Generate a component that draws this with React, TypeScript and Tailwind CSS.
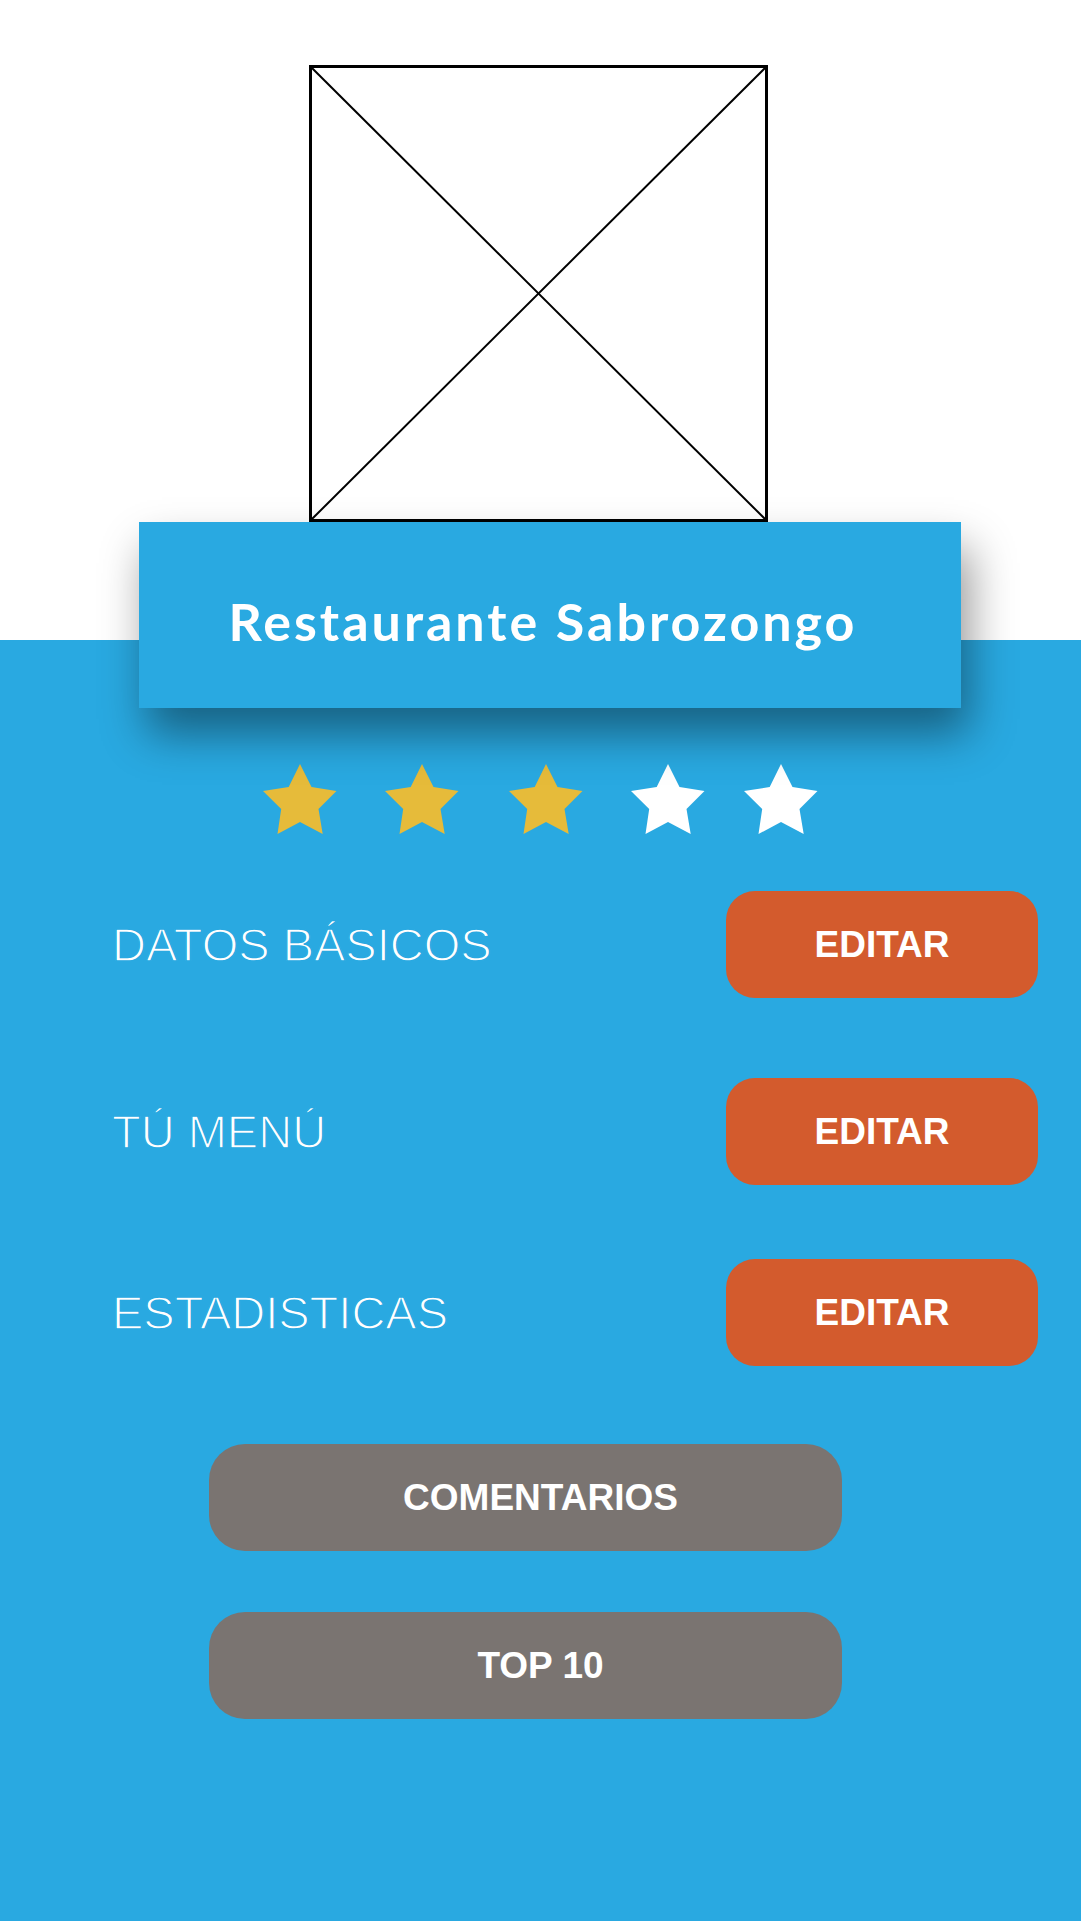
import React from "react"

const rows = [
  { label: "DATOS BÁSICOS", top: "mt-[57px]" },
  { label: "TÚ MENÚ", top: "mt-[80px]" },
  { label: "ESTADISTICAS", top: "mt-[74px]" },
]

const stars = [
  { filled: true, cls: "ml-[263px]" },
  { filled: true, cls: "ml-[48px]" },
  { filled: true, cls: "ml-[50px]" },
  { filled: false, cls: "ml-[48px]" },
  { filled: false, cls: "ml-[39px]" },
]

function Star({ filled, className }: { filled: boolean; className: string }) {
  return (
    <svg viewBox="0 0 74 70" className={`h-[70px] w-[74px] ${className}`}>
      <polygon
        points="37,0 48.5,23 73.5,27 55.5,45 59.7,70 37,58 14.5,70 18.2,45 0,27 25.7,23"
        fill={filled ? "#e6bb3a" : "#ffffff"}
      />
    </svg>
  )
}

export default function App() {
  return (
    <div className="flex min-h-[1921px] w-full flex-col bg-white" style={{ fontFamily: "'Liberation Sans', Arial, sans-serif" }}>
      {/* top: placeholder image + title card */}
      <div className="flex flex-col bg-white pt-[65px]">
        <div className="ml-[309px] h-[457px] w-[459px] border-[3px] border-black">
          <svg viewBox="0 0 100 100" preserveAspectRatio="none" className="h-full w-full">
            <line x1="0" y1="0" x2="100" y2="100" stroke="#000" strokeWidth="2" vectorEffect="non-scaling-stroke" />
            <line x1="100" y1="0" x2="0" y2="100" stroke="#000" strokeWidth="2" vectorEffect="non-scaling-stroke" />
          </svg>
        </div>
        <div className="relative z-10 -mb-[68px] ml-[139px] flex h-[186px] w-[822px] items-center justify-center bg-[#29a9e1] pr-[14px] pt-[12px] shadow-[8px_26px_42px_rgba(0,0,0,0.42)]">
          <h1 className="text-[52px] font-bold tracking-[3px] text-white" style={{ fontFamily: "Lato, 'Open Sans', sans-serif" }}>
            Restaurante Sabrozongo
          </h1>
        </div>
      </div>

      {/* blue panel */}
      <div className="flex flex-1 flex-col bg-[#29a9e1] pt-[124px]">
        <div className="flex">
          {stars.map((s, i) => (
            <Star key={i} filled={s.filled} className={s.cls} />
          ))}
        </div>

        {rows.map((row) => (
          <div key={row.label} className={`flex items-center justify-between pl-[112px] pr-[43px] ${row.top}`}>
            <span className="text-[47px] leading-none text-white [-webkit-text-stroke:1.4px_#29a9e1]">
              {row.label}
            </span>
            <button className="flex h-[107px] w-[312px] items-center justify-center rounded-[29px] bg-[#d35b2d] text-[37px] font-bold text-white">
              EDITAR
            </button>
          </div>
        ))}

        <button className="ml-[209px] mt-[78px] flex h-[107px] w-[633px] items-center justify-center rounded-[36px] bg-[#7a7471] pl-[30px] text-[37px] font-bold text-white">
          COMENTARIOS
        </button>
        <button className="ml-[209px] mt-[61px] flex h-[107px] w-[633px] items-center justify-center rounded-[36px] bg-[#7a7471] pl-[30px] text-[37px] font-bold text-white">
          TOP 10
        </button>
      </div>
    </div>
  )
}
